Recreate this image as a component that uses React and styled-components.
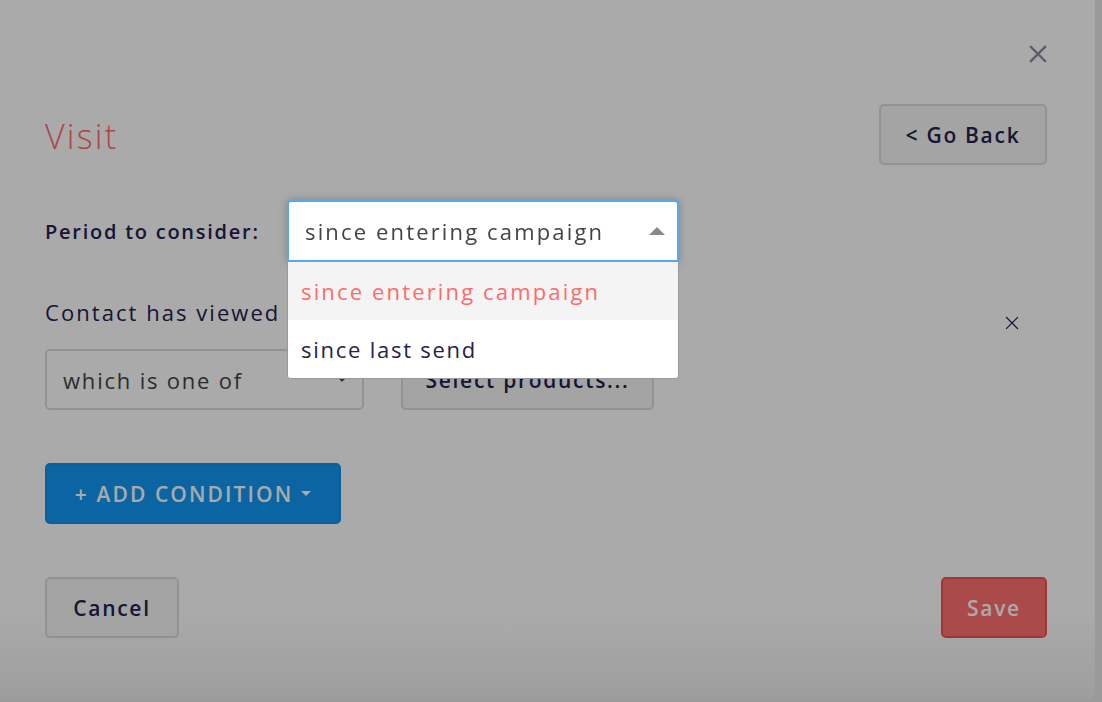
import React from "react";
import styled, { createGlobalStyle } from "styled-components";

const GlobalStyle = createGlobalStyle`
  html, body {
    margin: 0;
    padding: 0;
    width: 1102px;
    height: 702px;
    overflow: hidden;
    background: #e8e8e8;
  }
  * {
    box-sizing: border-box;
  }
`;

const navy = "#23234f";
const accent = "#ff6b6b";

// Page and modal shell
const Page = styled.div`
  width: 1102px;
  height: 702px;
  font-family: "Open Sans", "Liberation Sans", sans-serif;
  color: ${navy};
`;

const Modal = styled.div`
  margin: -10px 0 0 -10px;
  width: 1105px;
  height: 710px;
  border-radius: 10px;
  background: linear-gradient(to bottom, #ffffff 0%, #ffffff 88%, #ececec 100%);
  padding: 55px 48px 0 55px;
  display: flex;
  flex-direction: column;
`;

// Dark backdrop lying over the modal, the open select sits above it
const Backdrop = styled.div`
  position: fixed;
  inset: 0;
  background: rgba(0, 0, 0, 0.333);
  z-index: 1;
`;

const CloseRow = styled.div`
  display: flex;
  justify-content: flex-end;
  height: 18px;
`;

const IconButton = styled.button`
  border: none;
  background: none;
  padding: 0;
  width: 18px;
  height: 18px;
  display: flex;
  align-items: center;
  justify-content: center;
  cursor: pointer;
`;

const HeaderRow = styled.div`
  margin-top: 41px;
  display: flex;
  align-items: center;
  justify-content: space-between;
  height: 61px;
`;

const Title = styled.h2`
  margin: 2px 0 0;
  font-size: 34px;
  font-weight: 300;
  color: ${accent};
  letter-spacing: 2.2px;
`;

const Button = styled.button`
  height: 61px;
  width: ${(p) => p.$width}px;
  border-radius: 5px;
  border: 2px solid ${(p) => (p.$variant === "danger" ? "#f25252" : p.$variant === "primary" ? "#0f90e8" : "#dcdcdc")};
  background: ${(p) => (p.$variant === "danger" ? "#ff6f6f" : p.$variant === "primary" ? "#1198f5" : "#f7f7f7")};
  color: ${(p) => (p.$variant ? "#ffffff" : navy)};
  font-family: inherit;
  font-size: 21px;
  font-weight: 600;
  letter-spacing: ${(p) => (p.$variant === "primary" ? 2.1 : 1.7)}px;
  display: flex;
  align-items: center;
  justify-content: center;
  gap: 8px;
  cursor: pointer;
  padding: 0;
`;

const PeriodRow = styled.div`
  margin-top: 35px;
  display: flex;
  align-items: center;
  height: 62px;
`;

const Label = styled.span`
  font-size: 20px;
  font-weight: 600;
  letter-spacing: 1.75px;
  width: 242px;
`;

const SelectWrap = styled.div`
  position: relative;
  z-index: 2;
  width: 392px;
`;

const SelectBox = styled.div`
  height: 62px;
  border: 2px solid ${(p) => (p.$open ? "#5aa9e6" : "#dcdcdc")};
  border-radius: ${(p) => (p.$open ? "4px 4px 0 0" : "5px")};
  background: #fff;
  display: flex;
  align-items: center;
  justify-content: space-between;
  padding: 0 12px 0 16px;
  font-size: 22px;
  color: #444;
  letter-spacing: 2.15px;
  box-shadow: ${(p) => (p.$open ? "0 0 8px rgba(0, 0, 0, 0.25)" : "none")};
`;

const Arrow = styled.span`
  width: 0;
  height: 0;
  border-left: ${(p) => p.$size}px solid transparent;
  border-right: ${(p) => p.$size}px solid transparent;
  ${(p) => (p.$up ? "border-bottom" : "border-top")}: ${(p) => p.$size}px solid ${(p) => p.$color};
`;

const Menu = styled.ul`
  position: absolute;
  top: 62px;
  left: 0;
  right: 0;
  margin: 0;
  padding: 0;
  list-style: none;
  background: #fff;
  border: 1px solid #999;
  border-top: none;
  border-radius: 0 0 4px 4px;
  overflow: hidden;
`;

const MenuItem = styled.li`
  height: 58px;
  display: flex;
  align-items: center;
  padding-left: 13px;
  font-size: 22px;
  letter-spacing: ${(p) => (p.$active ? 2.15 : 1.75)}px;
  background: ${(p) => (p.$active ? "#f4f4f4" : "#fff")};
  color: ${(p) => (p.$active ? accent : navy)};
`;

const ConditionHead = styled.div`
  margin-top: 35px;
  height: 30px;
  display: flex;
  align-items: center;
  justify-content: space-between;
  padding-right: 28px;
`;

const ConditionText = styled.span`
  font-size: 22px;
  letter-spacing: 2.05px;
`;

const RemoveIcon = styled.span`
  display: flex;
  margin-top: 22px;
`;

const FilterRow = styled.div`
  margin-top: 22px;
  display: flex;
  align-items: center;
  gap: 37px;
`;

const PlainSelect = styled(SelectBox)`
  width: 319px;
  height: 61px;
  padding: 0 16px;
  letter-spacing: 1.8px;
`;

const AddRow = styled.div`
  margin-top: 53px;
  display: flex;
`;

const Footer = styled.div`
  margin-top: 53px;
  display: flex;
  justify-content: space-between;
`;

const Cross = ({ size, stroke, width }) => (
  <svg width={size} height={size} viewBox="0 0 18 18">
    <path d="M2 2 L16 16 M16 2 L2 16" stroke={stroke} strokeWidth={width} strokeLinecap="square" />
  </svg>
);

export default function App() {
  return (
    <Page>
      <GlobalStyle />
      <Modal>
        <CloseRow>
          <IconButton aria-label="close">
            <Cross size={18} stroke="#8a8aa0" width={2.4} />
          </IconButton>
        </CloseRow>

        <HeaderRow>
          <Title>Visit</Title>
          <Button $width={168}>&lt; Go Back</Button>
        </HeaderRow>

        <PeriodRow>
          <Label>Period to consider:</Label>
          <SelectWrap>
            <SelectBox $open>
              <span>since entering campaign</span>
              <Arrow $up $size={8} $color="#888" />
            </SelectBox>
            <Menu>
              <MenuItem $active>since entering campaign</MenuItem>
              <MenuItem>since last send</MenuItem>
            </Menu>
          </SelectWrap>
        </PeriodRow>

        <ConditionHead>
          <ConditionText>Contact has viewed</ConditionText>
          <RemoveIcon>
            <Cross size={14} stroke={navy} width={1.6} />
          </RemoveIcon>
        </ConditionHead>

        <FilterRow>
          <PlainSelect>
            <span>which is one of</span>
            <Arrow $size={4} $color="#555" />
          </PlainSelect>
          <Button $width={253}>Select products...</Button>
        </FilterRow>

        <AddRow>
          <Button $width={296} $variant="primary">
            + ADD CONDITION <Arrow $size={5} $color="#fff" />
          </Button>
        </AddRow>

        <Footer>
          <Button $width={134}>Cancel</Button>
          <Button $width={106} $variant="danger">Save</Button>
        </Footer>
      </Modal>
      <Backdrop />
    </Page>
  );
}
